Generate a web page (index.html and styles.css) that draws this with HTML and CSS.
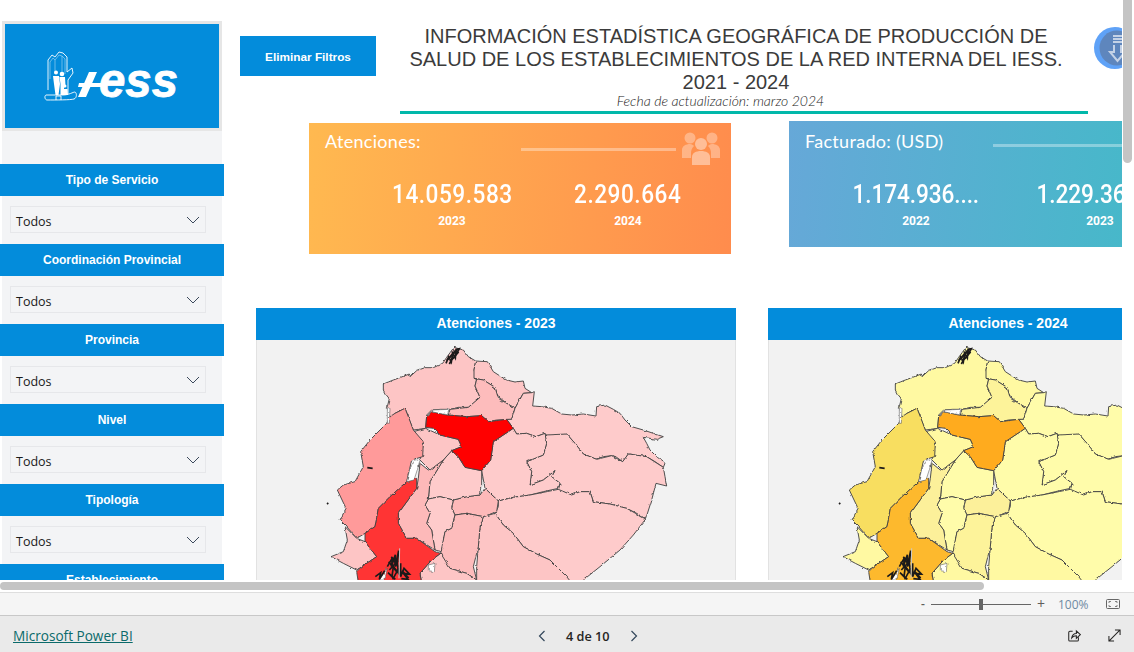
FILE: index.html
```
<!DOCTYPE html>
<html lang="es">
<head>
<meta charset="utf-8">
<title>Microsoft Power BI</title>
<link rel="stylesheet" href="styles.css">
</head>
<body>
<svg class="map-defs" width="0" height="0" aria-hidden="true">
  <defs>
    <filter id="rough" filterUnits="userSpaceOnUse" x="0" y="0" width="1500" height="900" color-interpolation-filters="sRGB">
      <feTurbulence type="fractalNoise" baseFrequency="0.07" numOctaves="3" seed="4" result="noise"/>
      <feDisplacementMap in="SourceGraphic" in2="noise" scale="8" xChannelSelector="R" yChannelSelector="G"/>
      <feGaussianBlur stdDeviation="1"/>
    </filter>
    <g id="ecuador">
      <g class="regions" filter="url(#rough)">
        <path class="c1" d="M400 252L415 246 430 240 452 232 478 222 480 230 500 212 525 203 550 203 578 190 590 172 612 142 640 150 655 170 677 183 672 210 680 238 675 258 690 292 670 310 655 322 625 322 600 328 572 328 545 330 530 345 527 385 490 390 480 365 475 350 465 325 435 340 420 360 412 320 418 296 405 280 400 270Z"/>
        <path class="c1" d="M677 183L712 185 730 215 750 228 770 240 795 246 820 243 825 265 845 278 820 280 808 300 795 325 770 310 745 290 735 262 700 240 672 235 672 210Z"/>
        <path class="c3" d="M672 235L700 240 735 262 745 295 795 325 785 358 740 360 715 365 695 347 650 350 595 345 600 328 655 322 690 292 675 258 680 238Z"/>
        <path class="c0" d="M845 278L853 275 848 318 875 320 905 325 935 342 965 345 1000 342 1038 348 1040 320 1065 315 1090 328 1110 340 1125 360 1145 380 1180 390 1240 410 1220 418 1180 412 1190 430 1200 450 1220 470 1245 490 1240 502 1215 485 1190 470 1160 466 1135 462 1118 485 1100 472 1085 467 1060 470 1040 478 1000 462 975 430 950 402 920 408 890 408 885 400 858 410 830 400 800 402 790 385 770 358 785 358 795 325 820 280Z"/>
        <path class="c0" d="M885 405L950 402 975 430 1000 462 1040 478 1085 467 1118 485 1135 462 1190 470 1240 502 1245 530 1250 558 1218 550 1205 600 1187 657 1160 640 1130 625 1080 612 1030 605 1020 575 990 575 965 585 925 570 930 550 905 530 915 512 880 540 840 555 845 515 830 485 880 465 890 430Z"/>
        <path class="c0" d="M790 385L800 402 830 400 858 410 885 400 890 430 880 465 830 485 845 515 840 555 880 540 915 512 905 530 930 550 925 565 880 575 840 585 790 592 745 603 705 565 695 512 722 480 730 425Z"/>
        <path class="c0" d="M745 603L790 592 840 585 925 568 965 585 990 575 1020 575 1030 605 1080 612 1130 625 1187 657 1150 705 1110 750 1050 800 1000 840 985 880 940 830 900 780 860 762 820 740 790 700 760 675 735 640 745 620Z"/>
        <path class="c1" d="M735 640L760 675 790 700 820 740 860 762 900 780 950 830 990 880 680 880 680 800 685 740 690 680 700 650Z"/>
        <path class="c4" d="M610 600L650 590 690 585 705 565 745 603 740 635 700 650 650 640 615 645 605 625Z"/>
        <path class="c0" d="M605 452L625 470 645 502 695 512 695 565 690 585 650 590 610 600 570 590 535 597 540 545 580 480Z"/>
        <path class="c0" d="M535 597L570 590 610 600 605 625 615 645 605 685 585 695 575 755 555 750 545 690 530 670 540 640 525 615Z"/>
        <path class="c3" d="M615 645L650 640 700 650 690 680 685 740 670 800 680 840 650 820 600 805 570 770 585 695 605 685Z"/>
        <path class="c4" d="M510 490L535 510 580 480 540 545 535 597 525 615 540 640 530 670 545 690 555 750 500 715 470 715 445 670 445 640 500 565 505 535Z"/>
        <path class="c1" d="M490 395L527 385 570 405 625 418 635 440 605 452 580 480 540 510 510 480 520 430Z"/>
        <path class="c5" d="M465 325L475 350 490 390 520 425 518 470 485 480 470 545 420 590 385 625 375 680 345 700 320 715 290 680 270 660 288 625 262 570 280 555 315 545 340 500 332 455 360 420 410 370 420 350 435 340Z"/>
        <path class="c1" d="M285 680L320 715 345 725 380 770 335 800 320 810 280 790 243 770 280 755 292 720Z"/>
        <path class="c1" d="M572 760L600 805 650 820 680 840 680 880 520 880 510 820 545 780Z"/>
        <path class="c6" d="M500 535L500 565 445 640 445 670 470 715 500 715 555 755 572 760 545 780 510 820 520 880 330 880 320 815 335 800 380 770 345 725 345 700 375 680 385 625 420 590 470 545Z"/>
        <path class="c7" d="M545 335L590 345 650 350 695 347 715 365 770 358 790 385 760 405 730 425 722 480 695 512 645 502 625 470 605 452 635 440 625 418 570 405 550 385 527 382 530 350Z"/>
        <path class="lake" d="M497 478L510 484 492 540 470 545 480 505Z"/>
        <path class="lake" d="M535 795L555 790 553 815 535 812Z"/>
        <path class="lake" d="M548 330L598 328 592 344 548 336Z"/>
        <path class="lake" d="M412 322L420 325 418 370 412 370Z"/>
        <path class="lake" d="M388 840L412 805 404 840Z"/>
      </g>
      <g class="islands">
        <path d="M588 190L596 170 604 186 608 160 616 174 618 148 628 146 616 168 606 178 598 192"/>
        <path d="M594 178L622 150M600 184L626 156M590 182L616 152"/>
        <path d="M412 800L428 772 424 800 436 764 436 800 446 752 442 790 446 820 430 800 426 830 414 818 436 838"/>
        <path d="M452 790L452 830 462 805 478 822 460 820 474 838 454 836M416 785L440 815M424 770L444 800M418 810L444 782M428 838L446 805M456 812L476 834"/>
        <path d="M376 830L392 818 388 838 404 812"/>
        <path d="M352 503L368 505"/>
        <path d="M231 609L235 612"/>
      </g>
      <path class="channel" d="M447 835L449 745"/>
    </g>
  </defs>
</svg>

<div class="report">
  <aside class="sidebar">
    <div class="logo-frame">
      <svg class="logo" viewBox="0 0 214 104" aria-label="IESS">
        <g class="hand">
          <path d="M43 66V36L47 31 50 33 54 28 58 29 62 33V48L67 44 68 49 63 56V70"/>
          <path class="hand-thin" d="M45 55V38L48 34 50 36V50M50 36L54 31 57 32V50M57 32L60 35V50"/>
          <path d="M41 71H58C64 71 68 68 70 68 72 69 72 74 69 75 66 76 50 76 42 76 40 76 39 72 41 71Z"/>
          <path d="M51 76V72H56V76"/>
        </g>
        <g class="family">
          <circle cx="51" cy="48.500" r="2"/><circle cx="57" cy="50" r="2.300"/><circle cx="60" cy="62" r="1.500"/>
          <path d="M48 52H54L55 60 53.500 71H50.500L49 60ZM54.500 53H60L60.500 62 59 64 59 71H55.500L55.500 60Z"/>
          <path d="M59 65H62.500L63 71H59Z"/>
        </g>
        <g class="cross">
          <path d="M84 48H92L81 73H73Z"/>
          <path d="M74 59H96V63H73Z"/>
        </g>
        <text class="logo-word" x="94" y="73" textLength="79" lengthAdjust="spacingAndGlyphs">ess</text>
      </svg>
    </div>
    <div class="slicers">
      <section class="slicer">
        <h2 class="slicer-title">Tipo de Servicio</h2>
        <div class="dropdown"><span>Todos</span><svg class="chevron" viewBox="0 0 14 8"><path d="M1 1l6 6 6-6"/></svg></div>
      </section>
      <section class="slicer">
        <h2 class="slicer-title">Coordinación Provincial</h2>
        <div class="dropdown"><span>Todos</span><svg class="chevron" viewBox="0 0 14 8"><path d="M1 1l6 6 6-6"/></svg></div>
      </section>
      <section class="slicer">
        <h2 class="slicer-title">Provincia</h2>
        <div class="dropdown"><span>Todos</span><svg class="chevron" viewBox="0 0 14 8"><path d="M1 1l6 6 6-6"/></svg></div>
      </section>
      <section class="slicer">
        <h2 class="slicer-title">Nivel</h2>
        <div class="dropdown"><span>Todos</span><svg class="chevron" viewBox="0 0 14 8"><path d="M1 1l6 6 6-6"/></svg></div>
      </section>
      <section class="slicer">
        <h2 class="slicer-title">Tipología</h2>
        <div class="dropdown"><span>Todos</span><svg class="chevron" viewBox="0 0 14 8"><path d="M1 1l6 6 6-6"/></svg></div>
      </section>
      <section class="slicer">
        <h2 class="slicer-title">Establecimiento</h2>
      </section>
    </div>
  </aside>

  <main class="canvas">
    <header class="top">
      <button class="clear-btn">Eliminar Filtros</button>
      <div class="heading">
        <h1 class="title">INFORMACIÓN ESTADÍSTICA GEOGRÁFICA DE PRODUCCIÓN DE<br>SALUD DE LOS ESTABLECIMIENTOS DE LA RED INTERNA DEL IESS.<br>2021 - 2024</h1>
        <p class="updated">Fecha de actualización: marzo 2024</p>
        <div class="rule"></div>
      </div>
      <div class="round-btn">
        <svg viewBox="0 0 42 42">
          <circle cx="21" cy="21" r="21" class="rb-outer"/>
          <circle cx="23" cy="21" r="17.500" class="rb-inner"/>
          <path class="rb-arrow" d="M19 9H28M19 12H28M19 15H28M20 18V25H16L23.500 34 31 25H27V18"/>
        </svg>
      </div>
    </header>

    <div class="kpis">
      <section class="kpi kpi-orange">
        <div class="kpi-head">
          <h3 class="kpi-title">Atenciones:</h3>
          <div class="kpi-line"></div>
          <svg class="people" viewBox="0 0 40 34">
            <circle cx="9" cy="7" r="5.500"/><circle cx="31" cy="7" r="5.500"/>
            <path d="M1 27V19C1 15 5 13 9 13 11 13 12 14 13 15 11 17 10 19 10 22V27Z"/>
            <path d="M39 27V19C39 15 35 13 31 13 29 13 28 14 27 15 29 17 30 19 30 22V27Z"/>
            <circle class="people-front" cx="20" cy="13" r="6"/>
            <path class="people-front" d="M11 34V26C11 22 15 20 20 20 25 20 29 22 29 26V34Z"/>
          </svg>
        </div>
        <div class="kpi-stats">
          <div class="stat stat-a"><strong class="stat-num">14.059.583</strong><span class="stat-year">2023</span></div>
          <div class="stat stat-b"><strong class="stat-num">2.290.664</strong><span class="stat-year">2024</span></div>
        </div>
      </section>
      <section class="kpi kpi-blue">
        <div class="kpi-head">
          <h3 class="kpi-title">Facturado: (USD)</h3>
          <div class="kpi-line kpi-line-long"></div>
        </div>
        <div class="kpi-stats">
          <div class="stat stat-c"><strong class="stat-num">1.174.936....</strong><span class="stat-year">2022</span></div>
          <div class="stat stat-d"><strong class="stat-num">1.229.369....</strong><span class="stat-year">2023</span></div>
        </div>
      </section>
    </div>

    <div class="maps">
      <section class="map-panel map-red">
        <h2 class="map-title">Atenciones - 2023</h2>
        <div class="map-body">
          <svg class="map" viewBox="18 120 1440 720"><use href="#ecuador"/></svg>
        </div>
      </section>
      <section class="map-panel map-yellow">
        <h2 class="map-title">Atenciones - 2024</h2>
        <div class="map-body">
          <svg class="map" viewBox="18 120 1440 720"><use href="#ecuador"/></svg>
        </div>
      </section>
    </div>
  </main>

  <div class="scroll-v"></div>
</div>

<div class="hbar"><div class="scroll-h"></div></div>

<div class="zoombar">
  <span class="zoom-sign">-</span>
  <div class="slider"><span class="slider-thumb"></span></div>
  <span class="zoom-sign zoom-plus">+</span>
  <span class="zoom-value">100%</span>
  <svg class="fit" viewBox="0 0 14 10"><rect x=".5" y=".5" width="13" height="9" rx="1" class="fit-box"/><path class="fit-corners" d="M3 4V2.500H5M9 2.500H11V4M11 6V7.500H9M5 7.500H3V6"/></svg>
</div>

<footer class="footer">
  <a class="pbi-link" href="#">Microsoft Power BI</a>
  <nav class="pager">
    <svg class="pager-arrow" viewBox="0 0 8 12"><path d="M6.500 1L1.500 6l5 5"/></svg>
    <span class="pager-text">4 de 10</span>
    <svg class="pager-arrow" viewBox="0 0 8 12"><path d="M1.500 1l5 5-5 5"/></svg>
  </nav>
  <div class="foot-actions">
    <svg class="foot-icon" viewBox="0 0 14 14"><path d="M5 2.500H2C1.200 2.500.8 3 .8 3.700V11.800C.8 12.600 1.200 13 2 13H10C10.800 13 11.200 12.600 11.200 11.800V9"/><path d="M4 9.500C4.500 6.500 6.500 4.800 9 4.800V2L13.300 6 9 10V7.300C7 7.300 5.200 8 4 9.500Z"/></svg>
    <svg class="foot-icon" viewBox="0 0 14 14"><path d="M1 13L13 1M7.500 1H13V6.500M1 7.500V13H6.500"/></svg>
  </div>
</footer>
</body>
</html>
```
FILE: styles.css
```
* { box-sizing: border-box; }
html, body { margin: 0; padding: 0; height: 100%; overflow: hidden; background: #fff; }
body { width: 1134px; height: 652px; display: flex; flex-direction: column; font-family: "Open Sans", sans-serif; color: #252423; }
h1, h2, h3, p { margin: 0; font-weight: normal; }
.map-defs { position: absolute; }

.report { position: relative; height: 580px; display: flex; overflow: hidden; flex: none; }

/* Sidebar */
.sidebar { width: 220px; margin: 21px 2px 0; background: #f3f4f6; flex: none; display: flex; flex-direction: column; }
.logo-frame { height: 110px; border: 3px solid #e6e6e6; background: #038cdb; flex: none; }
.logo { display: block; width: 214px; height: 104px; }
.hand path { fill: none; stroke: #fff; stroke-width: .9; }
.hand .hand-thin { stroke-width: .5; opacity: .8; }
.family, .cross { fill: #fff; }
.logo-word { font: italic bold 48px "Liberation Sans", sans-serif; fill: #fff; stroke: #fff; stroke-width: .8; }
.slicers { margin-top: 33px; }
.slicer { height: 80px; }
.slicer-title { margin: 0 -2px; height: 32px; background: #038cdb; color: #fff; font: bold 12px/32px "Liberation Sans", sans-serif; text-align: center; }
.dropdown { margin: 10px 16px 0 8px; height: 27px; border: 1px solid #e6e7ea; display: flex; align-items: center; justify-content: space-between; padding: 3px 5px 0 5px; font-size: 12.500px; color: #1a1a1a; }
.chevron { width: 14px; height: 8px; margin-top: -3px; }
.chevron path { fill: none; stroke: #3c4a5c; stroke-width: 1; }

/* Canvas */
.canvas { width: 898px; flex: none; overflow: hidden; }
.top { display: flex; align-items: flex-start; padding-left: 16px; height: 113px; }
.clear-btn { width: 136px; height: 40px; margin-top: 36px; padding: 2px 0 0; flex: none; border: 0; background: #038cdb; color: #fff; font: bold 11.800px "Liberation Sans", sans-serif; }
.heading { width: 688px; margin-left: 24px; flex: none; padding-top: 25px; }
.title { padding-right: 16px; text-align: center; font: 20px/23px "Liberation Sans", sans-serif; color: #3b3b3b; }
.updated { padding-right: 47px; text-align: center; font: italic 300 14px/14px "Lato", sans-serif; color: #222; }
.rule { height: 3px; background: #01b8aa; margin-top: 3px; }
.round-btn { width: 42px; height: 42px; margin: 27px 0 0 6px; flex: none; }
.round-btn svg { display: block; width: 42px; height: 42px; }
.rb-outer { fill: #5fa2f7; }
.rb-inner { fill: #5e86bd; }
.rb-arrow { fill: none; stroke: #c4d2e6; stroke-width: 2; }

/* KPI cards */
.kpis { display: flex; align-items: flex-start; gap: 58px; margin: 10px 0 0 85px; height: 131px; }
.kpi { width: 422px; flex: none; color: #fff; padding: 0 0 0 16px; }
.kpi-orange { height: 131px; background: linear-gradient(95deg, #ffb950, #ff8c4d); }
.kpi-blue { height: 126px; margin-top: -2px; background: linear-gradient(95deg, #66a8d8, #3fbcc6); }
.kpi-head { display: flex; align-items: flex-start; height: 53px; padding-top: 6px; }
.kpi-blue .kpi-head { height: 55px; padding-top: 8px; }
.kpi-title { width: 196px; flex: none; font: 18px/24px "Lato", sans-serif; letter-spacing: .3px; }
.kpi-line { width: 155px; height: 3px; margin-top: 19px; background: rgba(255,255,255,.35); flex: none; }
.kpi-blue .kpi-title { width: 188px; }
.kpi-blue .kpi-line { margin-top: 15px; }
.kpi-line-long { width: 240px; }
.people { width: 40px; height: 34px; margin: 2px 0 0 5px; flex: none; fill: rgba(255,255,255,.32); }
.people .people-front { fill: rgba(255,255,255,.42); }
.kpi-stats { display: flex; }
.stat { display: flex; flex-direction: column; align-items: center; width: 160px; flex: none; }
.stat-a { margin-left: 47px; }
.stat-b { margin-left: 16px; }
.stat-c { margin-left: 31px; }
.stat-d { margin-left: 24px; }
.stat-num { font: 500 26px/36px Roboto, sans-serif; letter-spacing: .6px; white-space: nowrap; transform: scaleX(.87); }
.kpi-blue .stat-num { letter-spacing: -.1px; }
.stat-year { font: bold 12px/16px Roboto, sans-serif; margin-top: 1px; }

/* Maps */
.maps { display: flex; gap: 32px; margin: 54px 0 0 32px; }
.map-panel { width: 480px; flex: none; }
.map-title { height: 32px; background: #038cdb; color: #fff; font: bold 14px/31px "Liberation Sans", sans-serif; text-align: center; }
.map-body { height: 260px; background: #f2f2f2; border: 1px solid #e2e2e2; border-top: 0; overflow: hidden; }
.map { display: block; width: 480px; height: 240px; margin-left: -1px; }
.map-red { --c0: #fecbcb; --c1: #fdc5c5; --c3: #fdbcbc; --c4: #fdb9b9; --c5: #ff9a9a; --c6: #ff3434; --c7: #ff0000; }
.map-yellow { --c0: #fffcaa; --c1: #fff9a2; --c3: #fdf39a; --c4: #fcf09a; --c5: #f8de60; --c6: #fdb92d; --c7: #ffab1e; }
.regions path { stroke: #444; stroke-width: 2.800; stroke-linejoin: round; }
.c0 { fill: var(--c0); }
.c1 { fill: var(--c1); }
.c3 { fill: var(--c3); }
.c4 { fill: var(--c4); }
.c5 { fill: var(--c5); }
.c6 { fill: var(--c6); }
.c7 { fill: var(--c7); }
.regions .lake { fill: #fff; stroke-width: 1.500; }
.islands { fill: none; stroke: #1c1a1a; stroke-width: 5; }
.channel { stroke: #c9c9c9; stroke-width: 3; fill: none; }

/* Scrollbars */
.scroll-v { position: absolute; left: 1123px; top: 0; width: 9px; height: 163px; border-radius: 0 0 5px 5px; background: #c4c4c4; }
.hbar { height: 12px; padding-top: 2px; flex: none; }
.scroll-h { width: 984px; height: 8px; border-radius: 4px; background: #c4c4c4; }

/* Zoom bar */
.zoombar { height: 24px; flex: none; background: #f5f5f5; border-top: 1px solid #dedede; border-bottom: 1px solid #c8c8c8; display: flex; align-items: center; padding-left: 921px; color: #605e5c; font-size: 12px; }
.zoom-sign { width: 10px; line-height: 1; font-weight: 600; }
.slider { width: 100px; height: 1px; background: #666; position: relative; }
.slider-thumb { position: absolute; left: 48px; top: -5px; width: 4px; height: 11px; background: #666; }
.zoom-plus { margin-left: 6px; font-size: 14px; font-weight: 400; }
.zoom-value { margin-left: 11px; width: 48px; font-size: 12px; color: #6e8aa3; }
.fit { width: 14px; height: 10px; }
.fit-box { fill: none; stroke: #666; }
.fit-corners { fill: none; stroke: #666; stroke-width: .8; }

/* Footer */
.footer { flex: 1; background: #eaeaea; display: grid; grid-template-columns: 525px auto 1fr; align-items: center; padding: 3px 13px 0 13px; }
.pbi-link { color: #0b6a6a; font-size: 13.600px; }
.pager { display: flex; align-items: center; gap: 20px; }
.pager-arrow { width: 8px; height: 12px; }
.pager-arrow path { fill: none; stroke: #33475b; stroke-width: 1.200; }
.pager-text { font-size: 12.700px; font-weight: 600; color: #252423; }
.foot-actions { display: flex; justify-content: flex-end; gap: 27px; }
.foot-icon { width: 13px; height: 13px; }
.foot-icon path { fill: none; stroke: #252423; stroke-width: 1.100; }
```
